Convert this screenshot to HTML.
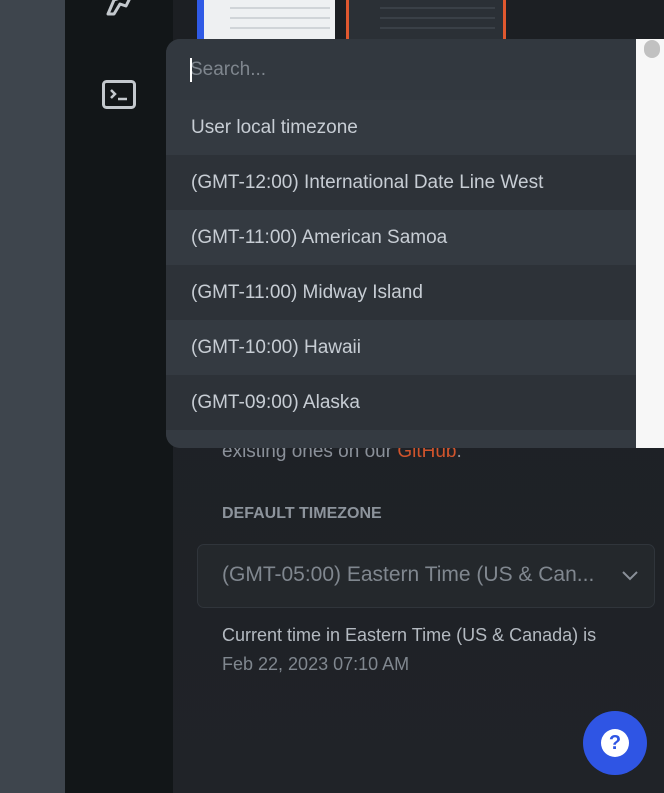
<!DOCTYPE html>
<html><head><meta charset="utf-8"><style>
*{margin:0;padding:0;box-sizing:border-box}
body{width:664px;height:793px;overflow:hidden;background:#1e2126;font-family:"Liberation Sans",sans-serif;position:relative}
.abs{position:absolute}
.strip{left:0;top:0;width:65px;height:793px;background:#3e454d}
.side{left:65px;top:0;width:108px;height:793px;background:#121618}
.main{left:173px;top:0;width:491px;height:793px;background:linear-gradient(#1c1f23,#202328)}
.dd{left:166px;top:39px;width:470px;height:409px;border-radius:14px 0 0 14px;overflow:hidden;background:#2d3238}
.row{height:55px;padding-left:25px;line-height:56px;color:#c7cdd4;font-size:19px}
.l{background:#343a41}.d{background:#2d3238}
.track{left:636px;top:39px;width:28px;height:409px;background:#f7f7f7}
.thumb{left:644px;top:40px;width:16px;height:18px;border-radius:8px;background:#c1c1c1}
</style></head><body>
<div class="abs strip"></div>
<div class="abs side"></div>
<div class="abs main"></div>
<svg class="abs" style="left:100px;top:-8px" width="40" height="28" viewBox="0 0 40 28"><path d="M8 22 L14 8 L32 2 L26 14 L20 12 L14 22 Z" fill="none" stroke="#c3c8cd" stroke-width="3" stroke-linejoin="round"/></svg>
<svg class="abs" style="left:102px;top:80px" width="34" height="30" viewBox="0 0 34 30"><rect x="1.5" y="1.5" width="31" height="26" rx="3" fill="none" stroke="#c3c8cd" stroke-width="3"/><path d="M9 10 L13 14 L9 18" fill="none" stroke="#c3c8cd" stroke-width="2.5"/><path d="M16 19 H25" stroke="#c3c8cd" stroke-width="2.5"/></svg>
<div class="abs" style="left:197px;top:0;width:138px;height:39px;background:#eef0f2"></div>
<div class="abs" style="left:197px;top:0;width:7px;height:39px;background:#2f5ae6"></div>
<div class="abs" style="left:230px;top:4px;width:100px;height:30px;background:repeating-linear-gradient(#eef0f2 0 3px,#d0d4d8 3px 5px,#eef0f2 5px 10px)"></div>
<div class="abs" style="left:346px;top:0;width:160px;height:39px;background:#e0582f"></div>
<div class="abs" style="left:349px;top:0;width:154px;height:39px;background:#2b3036"></div>
<div class="abs" style="left:380px;top:4px;width:115px;height:30px;background:repeating-linear-gradient(#2b3036 0 3px,#3a4047 3px 5px,#2b3036 5px 10px)"></div>
<div class="abs" style="left:222px;top:441px;color:#8a9099;font-size:19px">existing ones on our <span style="color:#d0542c">GitHub</span>.</div>
<div class="abs" style="left:222px;top:505px;color:#8d949c;font-size:16px;font-weight:bold">DEFAULT TIMEZONE</div>
<div class="abs" style="left:197px;top:544px;width:458px;height:64px;border:1px solid #30353b;border-radius:7px;background:#24282c"></div>
<div class="abs" style="left:222px;top:563px;color:#80878f;font-size:21px">(GMT-05:00) Eastern Time (US &amp; Can...</div>
<svg class="abs" style="left:620px;top:568px" width="20" height="14"><path d="M3 4 L10 11 L17 4" fill="none" stroke="#8a9099" stroke-width="2"/></svg>
<div class="abs" style="left:222px;top:625px;color:#b4bac1;font-size:18px">Current time in Eastern Time (US &amp; Canada) is</div>
<div class="abs" style="left:222px;top:654px;color:#80878f;font-size:18px">Feb 22, 2023 07:10 AM</div>
<div class="abs" style="left:583px;top:711px;width:64px;height:64px;border-radius:50%;background:#2f55e4"></div>
<div class="abs" style="left:601px;top:729px;width:28px;height:28px;border-radius:50%;background:#fff;color:#2f55e4;font-weight:bold;font-size:20px;text-align:center;line-height:28px">?</div>
<div class="abs dd">
<div style="height:61px;background:#32383f;padding-left:24px;line-height:62px;font-size:19px;color:#7f868e;position:relative"><span style="position:absolute;left:24px;top:19px;width:2px;height:24px;background:#fff"></span>Search...</div>
<div class="row l">User local timezone</div>
<div class="row d">(GMT-12:00) International Date Line West</div>
<div class="row l">(GMT-11:00) American Samoa</div>
<div class="row d">(GMT-11:00) Midway Island</div>
<div class="row l">(GMT-10:00) Hawaii</div>
<div class="row d">(GMT-09:00) Alaska</div>
<div class="row l"></div>
</div>
<div class="abs track"></div>
<div class="abs thumb"></div>
</body></html>
